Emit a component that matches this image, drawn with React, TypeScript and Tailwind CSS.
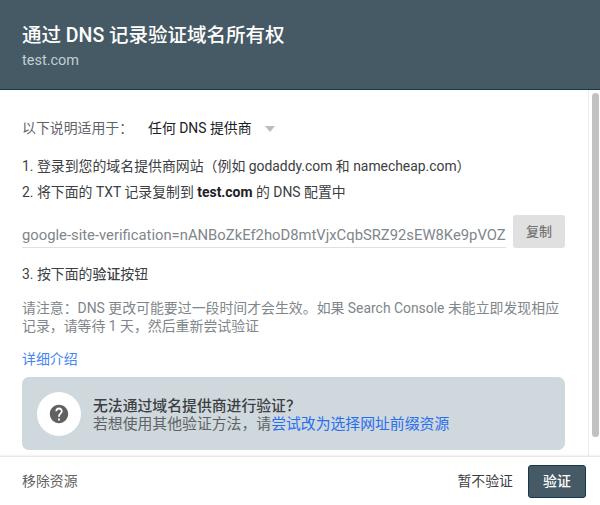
const font = { fontFamily: '"Roboto", "Noto Sans CJK SC", sans-serif' };

export default function App() {
  return (
    <div
      className="w-[600px] h-[505px] flex flex-col bg-white overflow-hidden text-[13.9px] text-[#3c4043]"
      style={font}
    >
      {/* header */}
      <div className="h-[90px] shrink-0 bg-[#455a64] border-b border-[#17384a] px-[22px] pt-[23px]">
        <div className="text-[19.5px] leading-[26px] font-medium text-white">通过 DNS 记录验证域名所有权</div>
        <div className="text-[14.5px] leading-[20px] mt-[2px] text-[#c3ced3]">test.com</div>
      </div>

      {/* scroll area */}
      <div className="flex-1 min-h-0 flex overflow-hidden">
        <div className="w-[588px] shrink-0 pl-[22px] pr-[23px] pt-[28px] overflow-hidden">
          <div className="flex items-center h-[20px] leading-[20px]">
            <span className="w-[126px] text-[#5f6368]">以下说明适用于：</span>
            <span className="text-[#202124]">任何 DNS 提供商</span>
            <span className="ml-[13px] mt-[1px] w-0 h-0 border-x-[5.5px] border-x-transparent border-t-[6px] border-t-[#bdbdbd]" />
          </div>
          <div className="mt-[18px] leading-[20px]">1. 登录到您的域名提供商网站（例如 godaddy.com 和 namecheap.com）</div>
          <div className="mt-[6px] leading-[20px]">
            2. 将下面的 TXT 记录复制到 <b className="font-bold text-[#202124]">test.com</b> 的 DNS 配置中
          </div>
          <div className="mt-[13px] flex items-start gap-[7px]">
            <div className="w-[484px] h-[33px] border-b border-[#e0e0e0] text-[14.8px] leading-[41px] text-[#80868b] overflow-hidden whitespace-nowrap">
              google-site-verification=nANBoZkEf2hoD8mtVjxCqbSRZ92sEW8Ke9pVOZ
            </div>
            <button className="w-[52px] h-[33px] rounded-[3px] bg-[#e0e0e0] text-[#757575] text-[13px] font-medium">复制</button>
          </div>
          <div className="mt-[16px] leading-[20px]">
            3. 按下面的<span className="font-medium">验证</span>按钮
          </div>
          <div className="mt-[15px] w-[543px] leading-[18px] text-[#80868b]">
            请注意：DNS 更改可能要过一段时间才会生效。如果 Search Console 未能立即发现相应记录，请等待 1 天，然后重新尝试验证
          </div>
          <div className="mt-[14px] leading-[20px] text-[#4285f4]">详细介绍</div>
          <div className="mt-[8px] h-[73px] rounded-[7px] bg-[#cfd8dc] flex items-center pl-[15px]">
            <div className="w-[44px] h-[44px] shrink-0 rounded-full bg-white flex items-center justify-center">
              <svg viewBox="0 0 24 24" className="w-[22px] h-[22px]" fill="#616161">
                <path d="M12 2C6.48 2 2 6.48 2 12s4.48 10 10 10 10-4.48 10-10S17.52 2 12 2zm1 17h-2v-2h2v2zm2.07-7.75l-.9.92C13.45 12.9 13 13.5 13 15h-2v-.5c0-1.1.45-2.1 1.17-2.83l1.24-1.26c.37-.36.59-.86.59-1.41 0-1.1-.9-2-2-2s-2 .9-2 2H8c0-2.21 1.79-4 4-4s4 1.79 4 4c0 .88-.36 1.68-.93 2.25z" />
              </svg>
            </div>
            <div className="ml-[12px] text-[14.85px] leading-[18px] mt-[3px]">
              <div className="font-medium text-[#3c4043]">无法通过域名提供商进行验证？</div>
              <div className="text-[#5f6368]">
                若想使用其他验证方法，请<span className="text-[#2a6ef0]">尝试改为选择网址前缀资源</span>
              </div>
            </div>
          </div>
        </div>

        {/* scrollbar */}
        <div className="w-[12px] shrink-0 border-l border-[#ececec] pl-[3px] pt-[3px]">
          <div className="w-[7px] h-[344px] rounded-full bg-[#c1c1c1]" />
        </div>
      </div>

      {/* footer */}
      <div className="h-[49px] shrink-0 border-t border-[#e8e8e8] shadow-[0_-1px_2px_rgba(0,0,0,0.06)] flex items-center pl-[22px] pr-[14px]">
        <span className="text-[#616161]">移除资源</span>
        <span className="ml-auto text-[#3c4043]">暂不验证</span>
        <button className="ml-[15px] w-[58px] h-[33px] rounded-[3px] bg-[#455a64] border border-[#17384a] text-white font-medium">验证</button>
      </div>
    </div>
  );
}
